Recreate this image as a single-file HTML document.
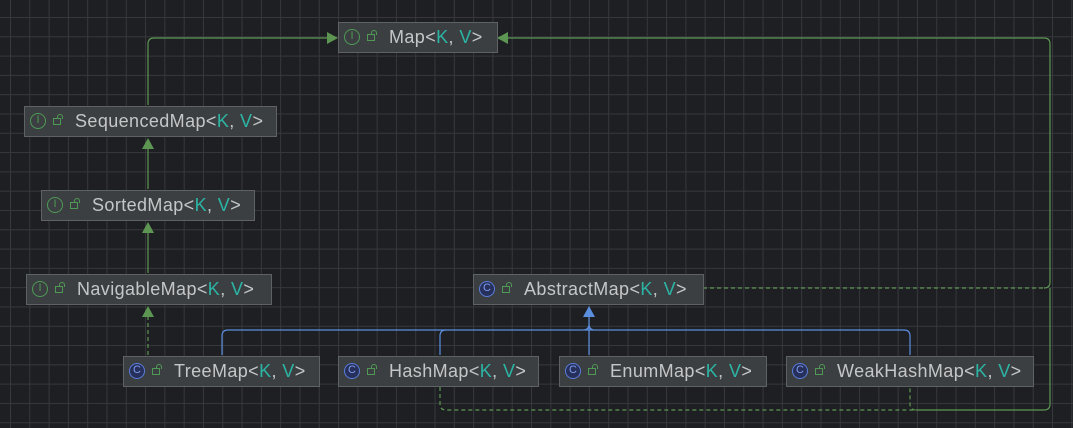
<!DOCTYPE html><html><head><style>
body{margin:0;width:1073px;height:428px;overflow:hidden;background:#1e1f22;
background-image:linear-gradient(#36383c 1px,transparent 1px),linear-gradient(90deg,#36383c 1px,transparent 1px);
background-size:19.3px 19.3px;background-position:10px 17px;font-family:"Liberation Sans",sans-serif;position:relative}
svg{position:absolute;left:0;top:0}
.b{position:absolute;height:31px;background:#3c3f41;border:1px solid #5f6265;box-sizing:border-box;color:#c4c6c8;font-size:18px;letter-spacing:0.4px;line-height:29px;white-space:nowrap}
.b i{font-style:normal;position:absolute;left:5px;top:6px;width:16px;height:16px;border-radius:50%;box-sizing:border-box;font-size:11px;line-height:13px;text-align:center;letter-spacing:0}
.b .I{border:1.5px solid #4e9a55;color:#4e9a55}
.b .C{border:1.5px solid #5a7ddc;color:#7f9cf0;background:#26305a}
.b u{position:absolute;left:28px;top:11px;width:6px;height:5px;border:1.3px solid #4e9a55;text-decoration:none}
.b u:before{content:"";position:absolute;left:3px;top:-5px;width:4px;height:4px;border:1.3px solid #4e9a55;border-bottom:none;border-radius:3px 3px 0 0}
.b span{position:absolute;left:50px}
.b em{font-style:normal;color:#2bb5a5}
</style></head><body>
<svg width="1073" height="428">
<g fill="none" stroke="#5d9653" stroke-width="1.2">
<path d="M148 105V44q0-6 6-6H330"/>
<path d="M505 38H1044q6 0 6 6V282q0 6-6 6"/>
<path d="M148 189V148M148 273V232"/>
<path d="M1050 288V404q0 6-6 6H916"/>
<g stroke-dasharray="4 3"><path d="M703 288H1044"/><path d="M148 355V316"/><path d="M440 387V404q0 6 6 6H916q-6 0-6-6V387"/></g>
</g>
<g fill="#5d9653"><path d="M338 38l-11-6v12z"/><path d="M497 38l11-6v12z"/><path d="M148 138l-6 11h12z"/><path d="M148 222l-6 11h12z"/><path d="M148 306l-6 11h12z"/></g>
<g fill="none" stroke="#5a8fe0" stroke-width="1.2"><path d="M222 355V336q0-6 6-6H904q6 0 6 6v19M440 355V336q0-6 6-6M589 355V317M583 330q6 0 6-6M595 330q-6 0-6-6"/></g>
<path d="M589 306l-6 11h12z" fill="#5a8fe0"/>
</svg>
<div class="b" style="left:338px;top:22px;width:160px"><i class="I">I</i><u></u><span>Map&lt;<em>K</em>, <em>V</em>&gt;</span></div>
<div class="b" style="left:24px;top:106px;width:253px"><i class="I">I</i><u></u><span>SequencedMap&lt;<em>K</em>, <em>V</em>&gt;</span></div>
<div class="b" style="left:41px;top:190px;width:214px"><i class="I">I</i><u></u><span>SortedMap&lt;<em>K</em>, <em>V</em>&gt;</span></div>
<div class="b" style="left:26px;top:274px;width:246px"><i class="I">I</i><u></u><span>NavigableMap&lt;<em>K</em>, <em>V</em>&gt;</span></div>
<div class="b" style="left:473px;top:274px;width:231px"><i class="C">C</i><u></u><span>AbstractMap&lt;<em>K</em>, <em>V</em>&gt;</span></div>
<div class="b" style="left:123px;top:356px;width:197px"><i class="C">C</i><u></u><span>TreeMap&lt;<em>K</em>, <em>V</em>&gt;</span></div>
<div class="b" style="left:338px;top:356px;width:201px"><i class="C">C</i><u></u><span>HashMap&lt;<em>K</em>, <em>V</em>&gt;</span></div>
<div class="b" style="left:559px;top:356px;width:208px"><i class="C">C</i><u></u><span>EnumMap&lt;<em>K</em>, <em>V</em>&gt;</span></div>
<div class="b" style="left:786px;top:356px;width:248px"><i class="C">C</i><u></u><span>WeakHashMap&lt;<em>K</em>, <em>V</em>&gt;</span></div>
</body></html>
